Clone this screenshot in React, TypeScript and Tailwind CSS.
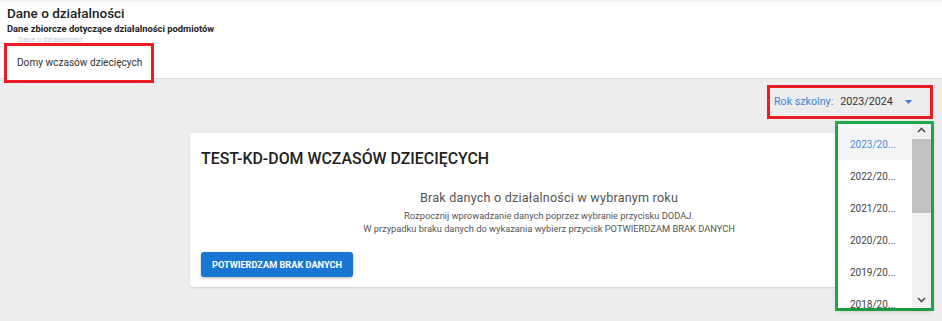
const years = ["2023/20...", "2022/20...", "2021/20...", "2020/20...", "2019/20...", "2018/20..."];

export default function App() {
    return (
        <div className="relative w-[942px] h-[321px] overflow-hidden bg-[#ededed] font-['Roboto',sans-serif] text-[#222]">
            {/* header */}
            <div className="h-[44px] bg-white border-t-2 border-[#f3f3f3] border-b border-b-[#c6c6c6] pl-[7px] pt-[3px]">
                <h1 className="text-[13.5px] font-medium leading-[17px] text-[#222]">Dane o działalności</h1>
                <p className="text-[9.4px] font-bold leading-[13px] text-[#222]">Dane zbiorcze dotyczące działalności podmiotów</p>
                <p className="ml-[11px] text-[7.5px] leading-[9px] text-[#c8c8c8]">Dane o działalności</p>
            </div>

            {/* tabs */}
            <div className="h-[36px] bg-white border-b border-[#dcdcdc] pl-[4px]">
                <div className="-mt-px flex h-[40px] w-[150px] items-center whitespace-nowrap border-[3px] border-[#ed1c24] bg-white pl-[10px] text-[10.1px] text-[#333]">
                    Domy wczasów dziecięcych
                </div>
            </div>

            {/* year select */}
            <div className="mt-[6px] flex justify-end pr-[9px]">
                <div className="flex h-[34px] w-[166px] items-center border-[3px] border-[#ed1c24] pl-[4px] text-[10.7px]">
                    <span className="text-[#3b82d6]">Rok szkolny:</span>
                    <span className="ml-[7px] text-[#333]">2023/2024</span>
                    <svg className="ml-[12px]" width="7" height="4" viewBox="0 0 7 4">
                        <path d="M0 0 L7 0 L3.5 4 Z" fill="#3b82d6" />
                    </svg>
                </div>
            </div>

            {/* card */}
            <div className="ml-[190px] mt-[14px] w-[718px] rounded-[3px] bg-white px-[11px] pt-[15px] pb-[10px] shadow-[0_1px_2px_rgba(0,0,0,0.12)]">
                <h2 className="text-[15.9px] font-medium leading-[22px] text-[#222]">TEST-KD-DOM WCZASÓW DZIECIĘCYCH</h2>
                <div className="mt-[19px] text-center text-[#555]">
                    <p className="text-[12.6px] leading-[18px] tracking-[0.2px]">Brak danych o działalności w wybranym roku</p>
                    <p className="mt-[3px] text-[9.3px] leading-[12.5px]">Rozpocznij wprowadzanie danych poprzez wybranie przycisku DODAJ.</p>
                    <p className="text-[9.3px] leading-[12.5px]">W przypadku braku danych do wykazania wybierz przycisk POTWIERDZAM BRAK DANYCH</p>
                </div>
                <button className="mt-[17px] h-[25px] w-[152px] rounded-[3px] bg-[#1976d2] text-[9.2px] font-bold text-white shadow-[0_1px_3px_rgba(0,0,0,0.3)]">
                    POTWIERDZAM BRAK DANYCH
                </button>
            </div>

            {/* dropdown */}
            <div className="absolute left-[835px] top-[121px] h-[190px] w-[99px] border-[3px] border-[#22b14c] bg-white">
                <div className="flex h-full shadow-[0_2px_6px_rgba(0,0,0,0.25)]">
                    <div className="flex-1 overflow-hidden pt-[4px]">
                        {years.map((y, i) => (
                            <div
                                key={y}
                                className={
                                    i === 0
                                        ? "flex h-[32px] items-center bg-[#f4f4f4] pl-[12px] text-[10px] text-[#4a8fdf]"
                                        : "flex h-[32px] items-center pl-[12px] text-[10px] text-[#444]"
                                }
                            >
                                {y}
                            </div>
                        ))}
                    </div>
                    <div className="flex w-[19px] flex-col items-center bg-[#f1f1f1]">
                        <svg className="mt-[3px]" width="9" height="6" viewBox="0 0 9 6">
                            <path d="M1 5 L4.5 1.5 L8 5" fill="none" stroke="#505050" strokeWidth="1.6" />
                        </svg>
                        <div className="mt-[6px] h-[74px] w-full bg-[#c1c1c1]" />
                        <div className="flex-1" />
                        <svg className="mb-[5px]" width="9" height="6" viewBox="0 0 9 6">
                            <path d="M1 1 L4.5 4.5 L8 1" fill="none" stroke="#505050" strokeWidth="1.6" />
                        </svg>
                    </div>
                </div>
            </div>
        </div>
    );
}
